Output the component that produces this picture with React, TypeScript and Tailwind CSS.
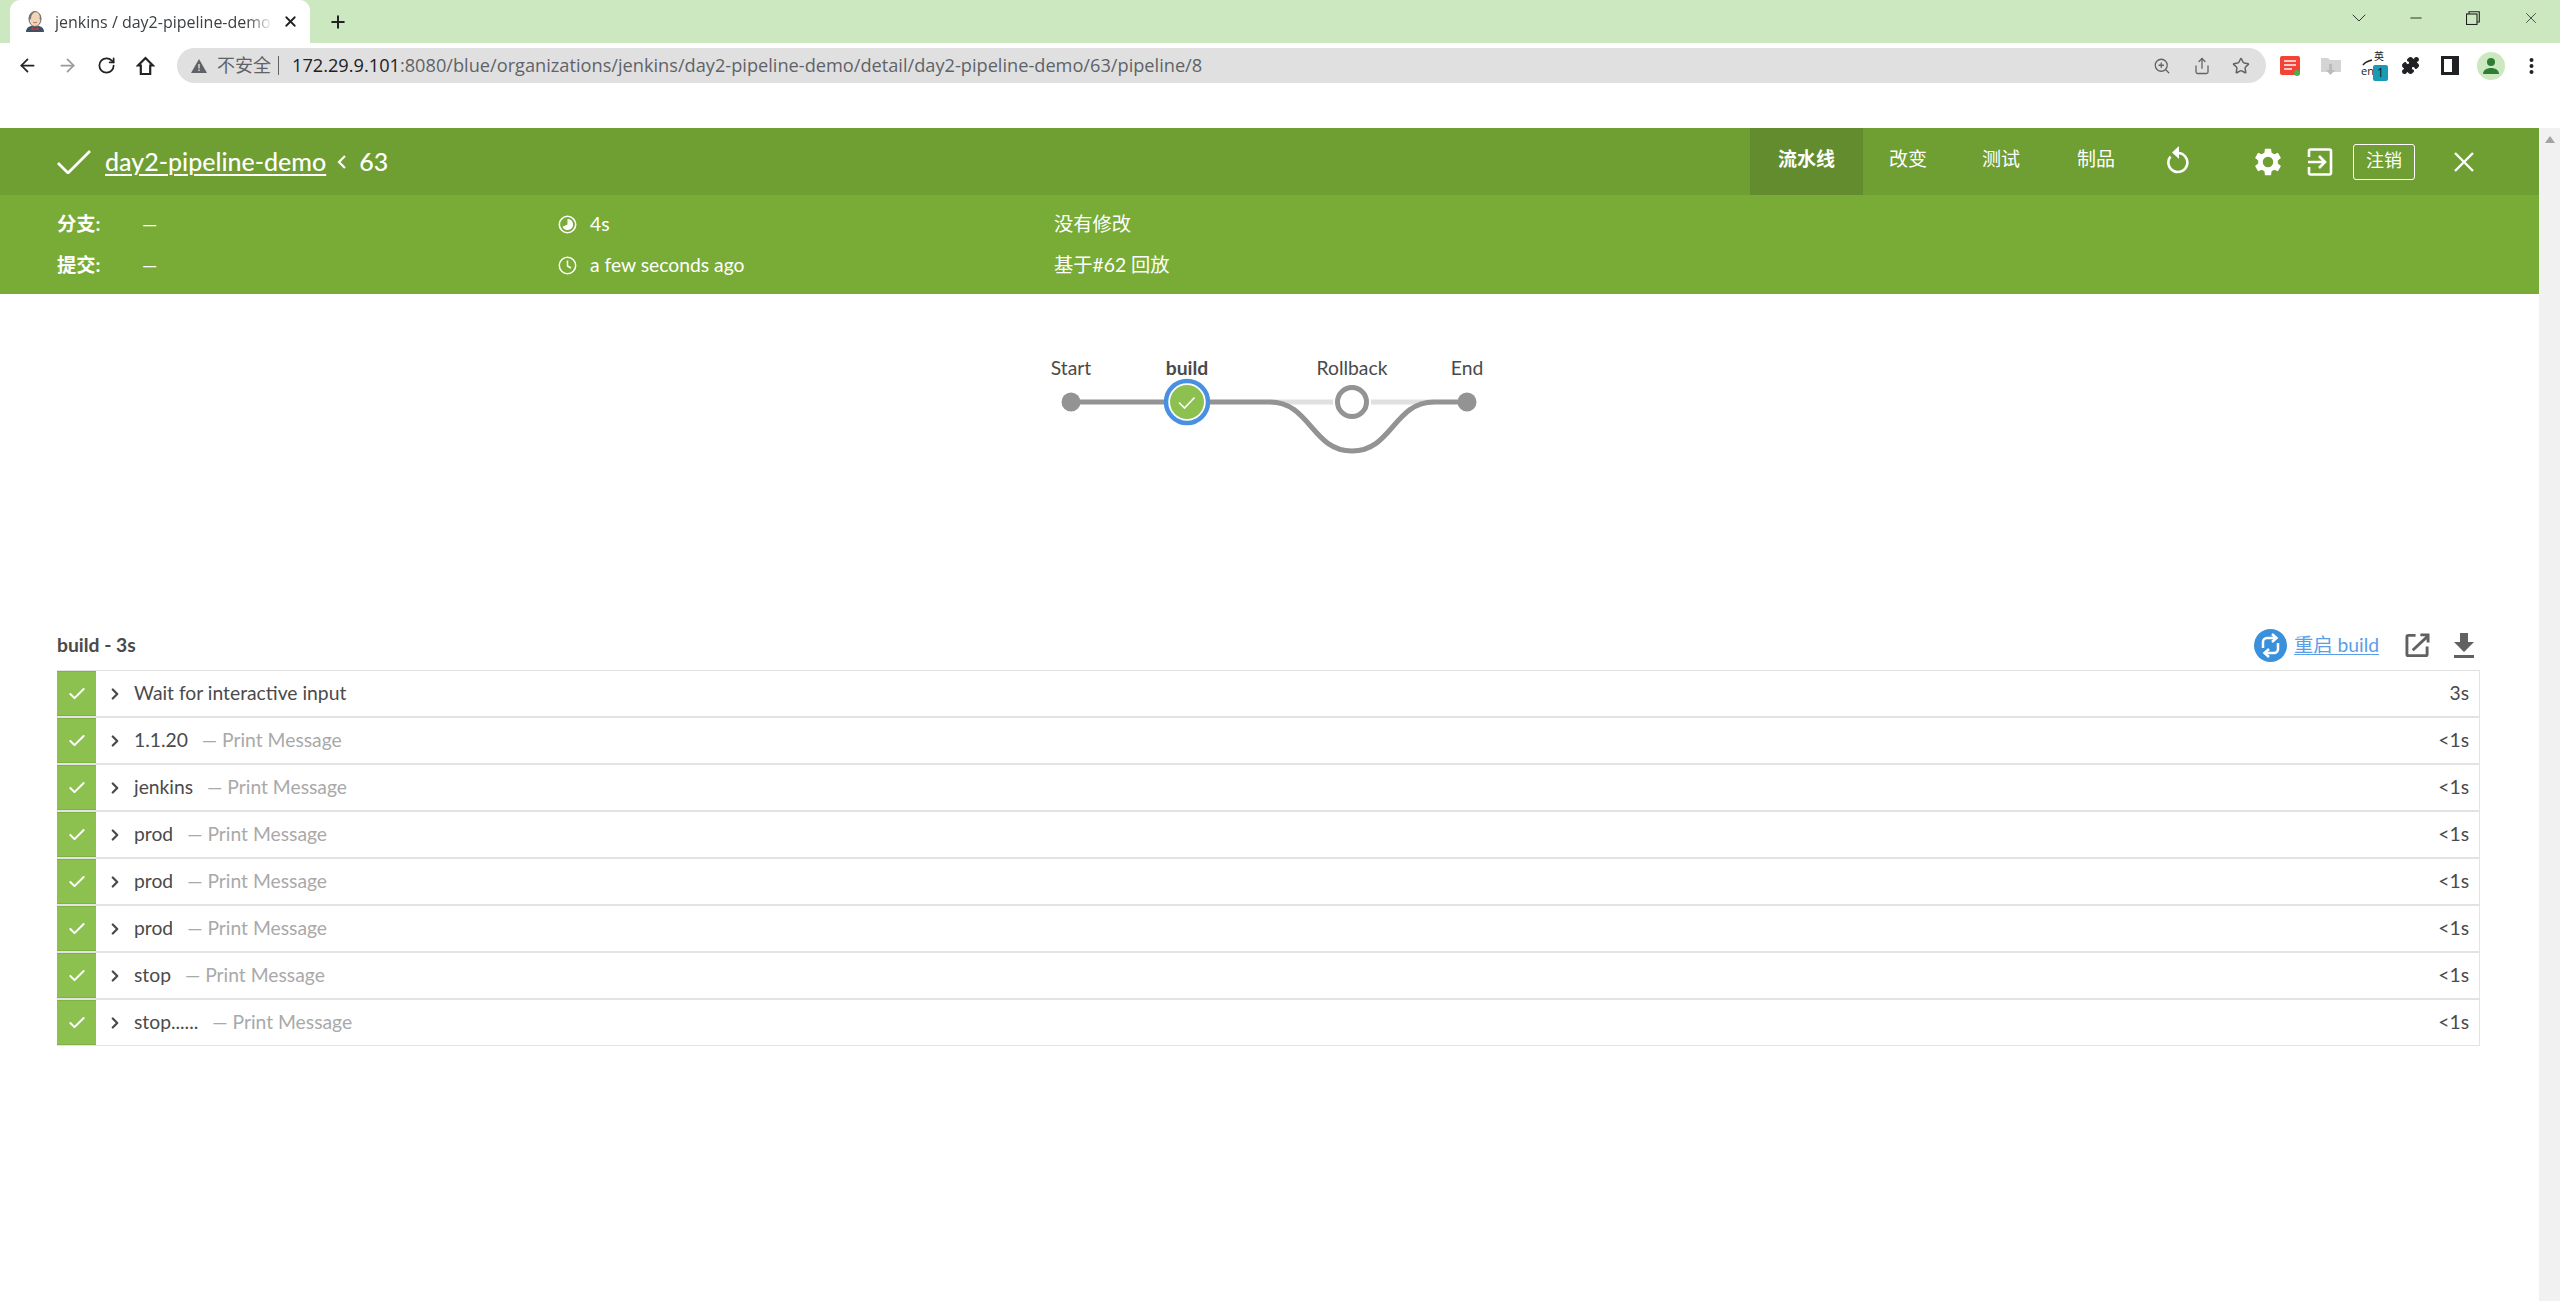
import React from "react";
import { ArrowLeft, ArrowRight, RotateCw, Plus, X, ChevronDown, Minus, ZoomIn, Share, Star, Puzzle, Check, ChevronRight } from "lucide-react";

const lato = "font-['Lato','Noto_Sans_CJK_SC',sans-serif]";
const chrome = "font-['Open_Sans','Noto_Sans_CJK_SC',sans-serif]";

const steps: [string, string, string][] = [
  ["Wait for interactive input", "", "3s"],
  ["1.1.20", "— Print Message", "<1s"],
  ["jenkins", "— Print Message", "<1s"],
  ["prod", "— Print Message", "<1s"],
  ["prod", "— Print Message", "<1s"],
  ["prod", "— Print Message", "<1s"],
  ["stop", "— Print Message", "<1s"],
  ["stop......", "— Print Message", "<1s"],
];

function Favicon() {
  return (
    <svg width="20" height="22" viewBox="0 0 20 22" className="shrink-0">
      <path d="M1 21c0-4 3-6 6-6h6c3 0 6 2 6 6z" fill="#3d5166" />
      <path d="M7 16l3 2 3-2 1 3-4-.5L6 19z" fill="#d33833" />
      <ellipse cx="10" cy="8" rx="6" ry="7.5" fill="#f0d6b7" stroke="#6d6b6d" strokeWidth="1" />
      <path d="M4 9C3 3 7 .5 10.500.5 8 2 6 4 6 8zM16 9c.5-3 0-5-2-7 1 2 1 4 .5 6z" fill="#7a7375" />
      <path d="M8 11c1 1 3 1 4 0" stroke="#a55" strokeWidth=".8" fill="none" />
    </svg>
  );
}

function Graph() {
  return (
    <div className={`relative mt-px h-[170px] w-[2539px] shrink-0 ${lato}`}>
      <svg width="2539" height="170" className="absolute left-0 top-0">
        <path d="M1270 107 L1435 107" stroke="#e0e0e0" strokeWidth="5" fill="none" />
        <path d="M1071 107 L1270 107 C1310 107 1312 156 1352 156 C1392 156 1394 107 1434 107 L1467 107" stroke="#949393" strokeWidth="5" fill="none" />
        <circle cx="1071" cy="107" r="9.5" fill="#949393" />
        <circle cx="1467" cy="107" r="9.5" fill="#949393" />
        <circle cx="1187" cy="107" r="21" fill="#fff" stroke="#4a90e2" strokeWidth="4.5" />
        <circle cx="1187" cy="107" r="17" fill="#8cc04f" />
        <path d="M1179 107.5l5.5 5.500 10-10.500" stroke="#fff" strokeWidth="1.6" fill="none" />
        <circle cx="1352" cy="107" r="19" fill="#fff" />
        <circle cx="1352" cy="107" r="14.5" fill="#fff" stroke="#949393" strokeWidth="5" />
      </svg>
      <span className="absolute left-[1071px] top-[61px] -translate-x-1/2 text-[19.3px] leading-[24px] text-[#4a4a4a]">Start</span>
      <span className="absolute left-[1187px] top-[61px] -translate-x-1/2 text-[19.3px] leading-[24px] font-bold text-[#4a4a4a]">build</span>
      <span className="absolute left-[1352px] top-[61px] -translate-x-1/2 text-[19.3px] leading-[24px] text-[#4a4a4a]">Rollback</span>
      <span className="absolute left-[1467px] top-[61px] -translate-x-1/2 text-[19.3px] leading-[24px] text-[#4a4a4a]">End</span>
    </div>
  );
}

export default function App() {
  return (
    <div className="relative h-[1301px] w-[2560px] overflow-hidden bg-white">
      {/* tab strip */}
      <div className={`flex h-[43px] items-end bg-[#cce8c0] pl-[10px] ${chrome}`}>
        <div className="flex h-[43px] w-[300px] items-center rounded-t-[10px] bg-white pl-[15px] pr-[8px]">
          <Favicon />
          <span className="ml-[10px] w-[218px] overflow-hidden whitespace-nowrap text-[16px] text-[#3c4043] [mask-image:linear-gradient(to_right,black_88%,transparent)]">jenkins / day2-pipeline-demo /</span>
          <X size={17} strokeWidth={2.5} className="ml-[9px] shrink-0 text-[#222]" />
        </div>
        <div className="flex h-[43px] items-center pl-[18px]">
          <Plus size={20} strokeWidth={2.4} className="text-[#222]" />
        </div>
        <div className="ml-auto flex h-[36px] items-center self-start pr-[16px]">
          <ChevronDown size={24} strokeWidth={0.9} className="mr-[36px] text-[#222]" />
          <Minus size={18} strokeWidth={1.2} className="mr-[41px] text-[#222]" />
          <svg width="14" height="14" viewBox="0 0 14 14" className="mr-[42px]" fill="none" stroke="#222" strokeWidth="1.1">
            <rect x="0.5" y="3" width="10.5" height="10.5" />
            <path d="M3 3V.8h10.3V11H11" />
          </svg>
          <X size={18} strokeWidth={1} className="mr-[4px] text-[#222]" />
        </div>
      </div>
      {/* toolbar */}
      <div className="flex h-[45px] items-center bg-white">
        <ArrowLeft size={21} strokeWidth={2} className="ml-[17px] text-[#222]" />
        <ArrowRight size={21} strokeWidth={2} className="ml-[19px] text-[#9a9a9a]" />
        <RotateCw size={19} strokeWidth={2.2} className="ml-[19px] text-[#222]" />
        <svg width="19" height="20" viewBox="0 0 19 20" fill="none" stroke="#222" strokeWidth="2.2" className="ml-[20px]"><path d="M9.500 2L2 9.500h2.800V18h9.400V9.500H17z" strokeLinejoin="miter" /></svg>
        <div className={`ml-[22px] flex h-[35px] w-[2089px] items-center rounded-full bg-[#e0e0e0] pl-[14px] pr-[16px] ${chrome}`}>
          <svg width="16" height="14" viewBox="0 0 16 14"><path d="M8 0l8 14H0z" fill="#5f6368" /><path d="M7.300 5h1.400v4.500H7.300zM7.300 10.500h1.400V12H7.300z" fill="#e0e0e0" /></svg>
          <span className="ml-[10px] text-[18px] text-[#5f6368]">不安全</span>
          <span className="ml-[7px] h-[19px] w-px bg-[#5f6368]" />
          <span className="ml-[13px] whitespace-nowrap text-[18.2px] text-[#5f6368]"><span className="text-[#202124]">172.29.9.101</span>:8080/blue/organizations/jenkins/day2-pipeline-demo/detail/day2-pipeline-demo/63/pipeline/8</span>
          <ZoomIn size={18} strokeWidth={1.7} className="ml-auto text-[#5f6368]" />
          <Share size={18} strokeWidth={1.7} className="ml-[22px] text-[#5f6368]" />
          <Star size={18} strokeWidth={2} className="ml-[21px] text-[#5f6368]" />
        </div>
        <div className="ml-[14px] flex items-center">
          <svg width="20" height="20" viewBox="0 0 20 20"><rect width="20" height="19" rx="2" fill="#f44336" /><path d="M4 5h12M4 9h12M4 13h8" stroke="#ffc9c4" strokeWidth="2" /><circle cx="17" cy="17" r="3" fill="#4caf50" /></svg>
          <svg width="20" height="20" viewBox="0 0 20 20" className="ml-[21px]"><path d="M0 2h7l2 2h11v12H0z" fill="#d4d4d4" /><path d="M8 8h3v6h3l-4.500 5L5 14h3z" fill="#bbb" /></svg>
          <div className="relative ml-[20px] h-[26px] w-[27px]">
            <span className={`absolute left-0 top-[12px] text-[11px] leading-[12px] text-[#222] ${chrome}`}>en</span>
            <span className={`absolute left-[13px] top-[-3px] text-[10px] leading-[12px] text-[#222] ${chrome}`}>英</span>
            <svg width="14" height="8" viewBox="0 0 14 8" className="absolute left-[1px] top-[5px]" fill="none" stroke="#222" strokeWidth="1.500"><path d="M1 7c2-3 5-4 9-5" /></svg>
            <span className="absolute left-[12px] top-[12px] flex h-[16px] w-[15px] items-center justify-center rounded-[2px] bg-[#1a9bb5] text-[12px] text-[#123]">1</span>
          </div>
          <Puzzle size={19} fill="#202124" strokeWidth={1.5} className="ml-[13px] text-[#202124]" />
          <svg width="18" height="19" viewBox="0 0 18 19" className="ml-[21px]"><path d="M0 0h18v19H0z" fill="#202124" /><path d="M3 3h8v13H3z" fill="#fff" /></svg>
          <div className="ml-[18px] flex h-[28px] w-[28px] items-center justify-center rounded-full bg-[#cce8c0]">
            <svg width="18" height="18" viewBox="0 0 18 18" fill="#2e7d32"><circle cx="9" cy="5" r="4" /><path d="M1 17c0-4 4-6 8-6s8 2 8 6z" /></svg>
          </div>
          <svg width="5" height="18" viewBox="0 0 5 18" className="ml-[24px]" fill="#222"><circle cx="2.500" cy="3" r="2" /><circle cx="2.500" cy="9" r="2" /><circle cx="2.500" cy="15" r="2" /></svg>
        </div>
      </div>
      <div className="h-[40px] bg-white" />

      {/* page */}
      <div className={`flex w-[2560px] ${lato}`}>
        <div className="w-[2539px] shrink-0">
          {/* result header */}
          <div className="flex h-[67px] items-center bg-[#6f9e33] pl-[57px] text-white">
            <svg width="34" height="24" viewBox="0 0 34 24" fill="none" stroke="#fff" strokeWidth="2.8" className="shrink-0"><path d="M1 13l10 10L33 1" /></svg>
            <span className="ml-[14px] pb-[2px] text-[25px] leading-[30px] font-medium underline underline-offset-[3px] decoration-[1.5px]">day2-pipeline-demo</span>
            <svg width="10" height="14" viewBox="0 0 10 14" fill="none" stroke="#fff" strokeWidth="2.2" className="ml-[11px]"><path d="M8 1L2 7l6 6" /></svg>
            <span className="ml-[12px] pb-[2px] text-[25px] leading-[30px] font-medium">63</span>
            <div className="ml-auto flex h-[67px] items-center text-[19px]">
              <div className="flex h-[67px] w-[113px] items-center justify-center bg-[#628c2d] pb-[4px] font-bold">流水线</div>
              <span className="ml-[26px] pb-[4px]">改变</span>
              <span className="ml-[55px] pb-[4px]">测试</span>
              <span className="ml-[57px] pb-[4px]">制品</span>
              <svg width="24" height="32" viewBox="0 0 24 32" className="mb-[5px] ml-[50px]">
                <path d="M13 10a9.500 9.500 0 1 1-7.500 3.500" fill="none" stroke="#fff" strokeWidth="2.600" />
                <path d="M14 3v13l-7-6.500z" fill="#fff" />
              </svg>
              <svg width="28" height="28" viewBox="3.900 2.700 18 18.600" fill="#fff" className="ml-[65px]">
                <path d="M19.400 13a7.500 7.500 0 0 0 0-2l2.100-1.600-2-3.500-2.500 1a7.500 7.500 0 0 0-1.700-1L14.900 3.200h-4l-.4 2.700a7.500 7.500 0 0 0-1.700 1l-2.500-1-2 3.500L6.400 11a7.500 7.500 0 0 0 0 2l-2.100 1.600 2 3.500 2.500-1a7.500 7.500 0 0 0 1.700 1l.4 2.700h4l.4-2.700a7.500 7.500 0 0 0 1.700-1l2.500 1 2-3.500zM12.900 15.500a3.500 3.500 0 1 1 0-7 3.500 3.500 0 0 1 0 7z" fillRule="evenodd" />
              </svg>
              <svg width="26" height="28" viewBox="0 0 26 28" fill="none" stroke="#fff" strokeWidth="2.600" className="ml-[25px]">
                <path d="M2 9V3a1.500 1.500 0 0 1 1.500-1.500h19A1.500 1.500 0 0 1 24 3v22a1.500 1.500 0 0 1-1.500 1.500h-19A1.500 1.500 0 0 1 2 25v-6" />
                <path d="M1 14h17M12 8l6 6-6 6" />
              </svg>
              <div className="ml-[20px] flex h-[36px] w-[62px] items-center justify-center rounded-[3px] border border-white pb-[2px] text-[18px]">注销</div>
              <svg width="22" height="22" viewBox="0 0 22 22" fill="none" stroke="#fff" strokeWidth="2.400" className="ml-[38px] mr-[64px]"><path d="M2 2l18 18M20 2L2 20" /></svg>
            </div>
          </div>
          {/* metadata */}
          <div className="flex h-[99px] bg-[#78ac37] pl-[57px] pt-[9px] text-[19.3px] text-white">
            <div className="flex w-[501px] flex-col">
              <div className="flex h-[41px] items-center"><span className="w-[85px] font-bold">分支:</span><span>—</span></div>
              <div className="flex h-[41px] items-center"><span className="w-[85px] font-bold">提交:</span><span>—</span></div>
            </div>
            <div className="flex w-[496px] flex-col">
              <div className="flex h-[41px] items-center">
                <svg width="19" height="19" viewBox="0 0 19 19" className="mr-[13px]"><circle cx="9.500" cy="9.500" r="8.200" fill="none" stroke="#fff" strokeWidth="1.600" /><path d="M9.500 4a5.500 5.500 0 1 1-5 7.800l5-2.300z" fill="#fff" /></svg>
                4s
              </div>
              <div className="flex h-[41px] items-center">
                <svg width="19" height="19" viewBox="0 0 19 19" fill="none" stroke="#fff" strokeWidth="1.500" className="mr-[13px]"><circle cx="9.500" cy="9.500" r="8.200" /><path d="M9.500 4.500v5.500l3.500 2" /></svg>
                a few seconds ago
              </div>
            </div>
            <div className="flex flex-col">
              <div className="flex h-[41px] items-center">没有修改</div>
              <div className="flex h-[41px] items-center">基于#62 回放</div>
            </div>
          </div>

          <Graph />

          {/* log */}
          <div className="mt-[158px] flex h-[44px] items-center pl-[57px] pr-[65px]">
            <span className="text-[19.3px] font-bold text-[#4a4a4a]">build - 3s</span>
            <div className="ml-auto flex items-center">
              <svg width="33" height="33" viewBox="0 0 33 33" fill="none" stroke="#fff" strokeWidth="2.500">
                <circle cx="16.500" cy="16.500" r="16.500" fill="#3a90db" stroke="none" />
                <path d="M9 19v-6a4 4 0 0 1 4-4h8M24 14v6a4 4 0 0 1-4 4h-8" />
                <path d="M18 5l4.500 4-4.500 4M15 20l-4.500 4 4.500 4" />
              </svg>
              <span className="ml-[7px] text-[19.3px] text-[#5b9ee8] underline underline-offset-2">重启 build</span>
              <svg width="25" height="25" viewBox="0 0 26 26" fill="none" stroke="#616161" strokeWidth="3" className="ml-[26px]">
                <path d="M11 2.500H3.500a1.500 1.500 0 0 0-1.500 1.500v18a1.500 1.500 0 0 0 1.500 1.500h18a1.500 1.500 0 0 0 1.500-1.500v-8" />
                <path d="M8 18L24 3M16 2h8v8" />
              </svg>
              <svg width="20" height="25" viewBox="0 0 20 25" fill="#616161" className="ml-[24px]">
                <path d="M6 0h8v9h6l-10 10L0 9h6zM0 22h20v3H0z" />
              </svg>
            </div>
          </div>
          <div className="ml-[57px] mr-[59px] mt-[3px] flex flex-col">
            {steps.map(([name, desc, time], i) => (
              <div key={i} className="flex h-[47px] items-stretch border border-l-0 border-[#e3e3e3] text-[19.3px]">
                <div className="flex w-[39px] shrink-0 items-center justify-center bg-[#8cc04f] border-y border-[#7fb243]">
                  <Check size={20} strokeWidth={2.4} className="text-white" />
                </div>
                <ChevronRight size={18} strokeWidth={3} className="ml-[10px] self-center text-[#4a4a4a]" />
                <span className="ml-[10px] self-center text-[#4a4a4a]">{name}</span>
                {desc && <span className="ml-[14px] self-center text-[#a9a9a9]">{desc}</span>}
                <span className="ml-auto self-center pr-[10px] text-[#4a4a4a]">{time}</span>
              </div>
            ))}
          </div>
        </div>
      </div>

      {/* scrollbar */}
      <div className="absolute bottom-0 right-0 top-[128px] w-[21px] bg-[#f1f1f1]">
        <div className="mx-auto mt-[8px] h-0 w-0 border-x-[5px] border-b-[7px] border-x-transparent border-b-[#a3a3a3]" />
      </div>
    </div>
  );
}
